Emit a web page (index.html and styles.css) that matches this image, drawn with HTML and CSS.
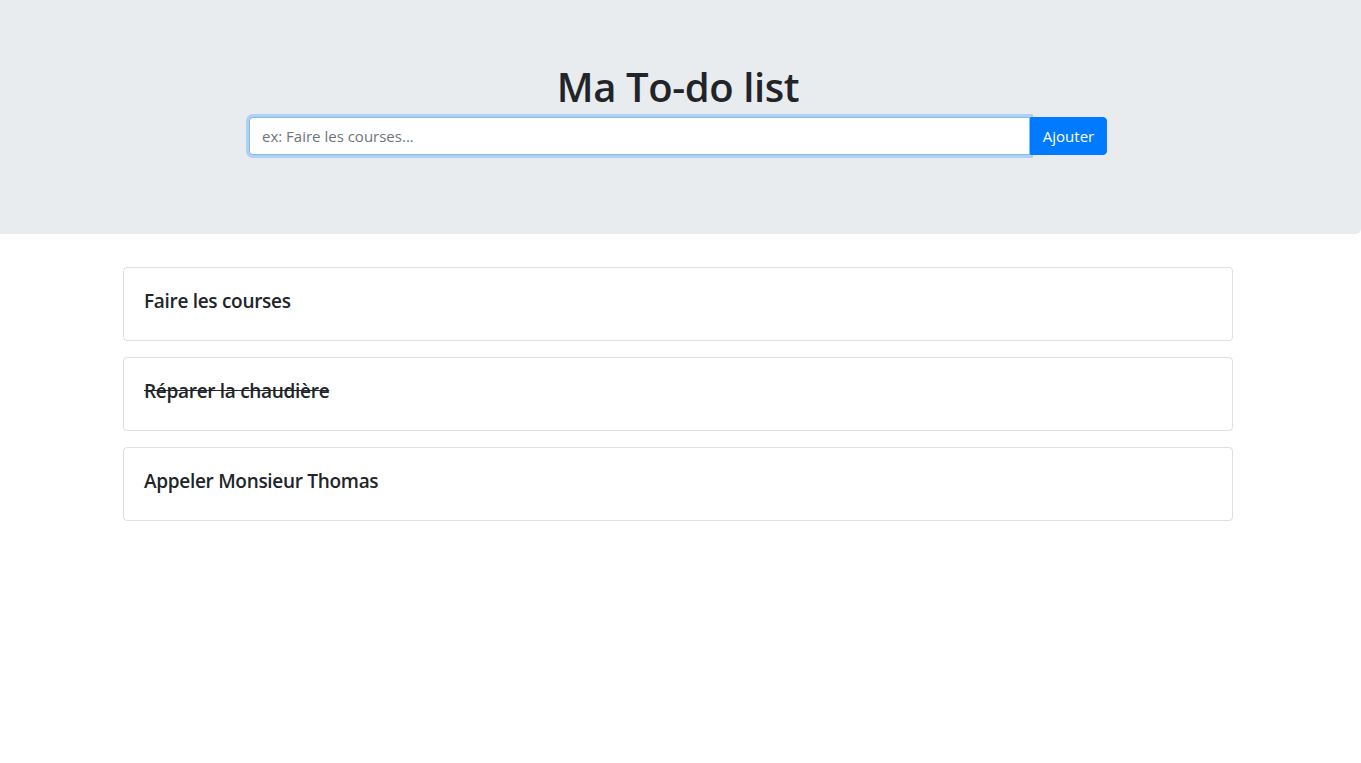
FILE: index.html
```html
<!DOCTYPE html>
<html lang="fr">
<head>
<meta charset="utf-8">
<title>Ma To-do list</title>
<link rel="stylesheet" href="styles.css">
</head>
<body>
<header class="jumbotron">
  <h1 class="title">Ma To-do list</h1>
  <form class="add-form">
    <input class="add-input" type="text" placeholder="ex: Faire les courses...">
    <button class="add-btn" type="button">Ajouter</button>
  </form>
</header>
<main class="container">
  <div class="card"><h5 class="card-title">Faire les courses</h5></div>
  <div class="card"><h5 class="card-title done">Réparer la chaudière</h5></div>
  <div class="card"><h5 class="card-title">Appeler Monsieur Thomas</h5></div>
</main>
</body>
</html>
```
FILE: styles.css
```css
* { box-sizing: border-box; }
body {
  margin: 0;
  font-family: "Open Sans", "Noto Sans", "Liberation Sans", sans-serif;
  color: #212529;
  background: #fff;
}
.jumbotron {
  background: #e9ecef;
  border-radius: 0 0 5px 0;
  padding: 63px 32px;
  margin-bottom: 33px;
  display: flex;
  flex-direction: column;
  align-items: center;
}
.title {
  margin: 0 0 6px -5px;
  font-size: 40px;
  font-weight: 600;
  line-height: 48px;
  letter-spacing: -0.4px;
}
.add-form {
  display: flex;
  width: 858px;
  margin: 0 0 16px;
  margin-left: -5px;
}
.add-input {
  flex: 1;
  height: 38px;
  border: 1px solid #80bdff;
  border-radius: 4px 0 0 4px;
  padding: 6px 12px;
  font-family: inherit;
  font-size: 15px;
  color: #495057;
  outline: none;
  box-shadow: 0 0 0 3px rgba(0,123,255,.25);
  background: #fff;
}
.add-input::placeholder { color: #6c757d; }
.add-btn {
  width: 77px;
  height: 38px;
  border: 1px solid #007bff;
  background: #007bff;
  color: #fff;
  border-radius: 0 4px 4px 0;
  font-family: inherit;
  font-size: 15px;
  padding: 0;
}
.container {
  width: 1110px;
  margin: 0 0 0 123px;
  display: flex;
  flex-direction: column;
  gap: 16px;
}
.card {
  border: 1px solid rgba(0,0,0,.125);
  border-radius: 4px;
  padding: 21px 20px 19px;
}
.card-title {
  margin: 0 0 8px;
  font-size: 19px;
  font-weight: 600;
  line-height: 24px;
  letter-spacing: -0.3px;
}
.done { text-decoration: line-through; }
```
